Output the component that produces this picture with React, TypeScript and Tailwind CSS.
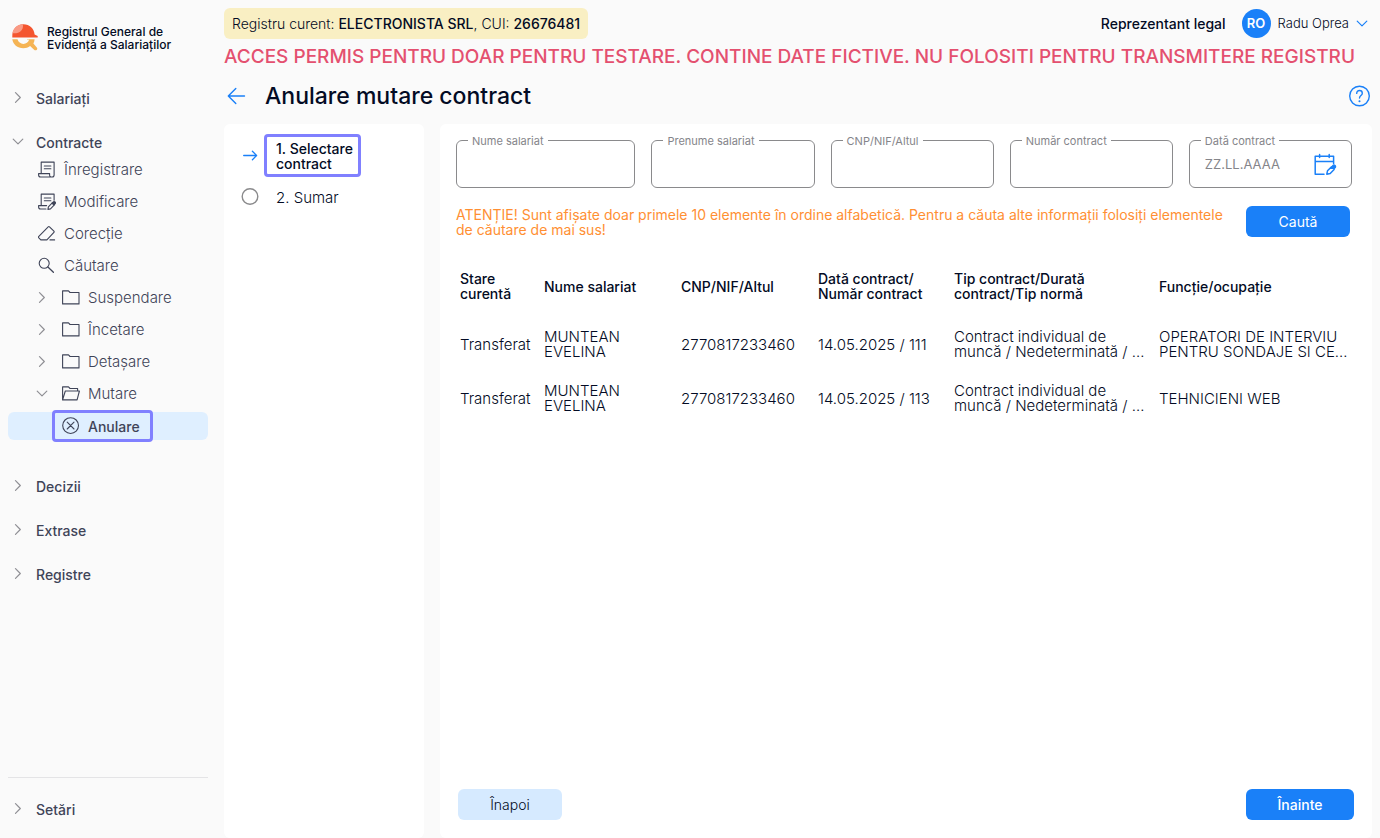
import type { ReactNode } from "react";

type IconProps = { className?: string };

function Svg({ className = "size-4", box = 16, children }: IconProps & { box?: number; children: ReactNode }) {
  return (
    <svg
      className={`shrink-0 ${className}`}
      viewBox={`0 0 ${box} ${box}`}
      fill="none"
      stroke="currentColor"
      strokeWidth="1.1"
      strokeLinecap="round"
      strokeLinejoin="round"
      aria-hidden="true"
    >
      {children}
    </svg>
  );
}

const ChevronRight = () => (
  <Svg className="size-3 text-[#8f8f94]" box={12}>
    <path d="M3.5.7 8.300 5.500l-4.800 4.800" strokeWidth="1.200" />
  </Svg>
);

const ChevronDown = ({ className = "size-3 text-[#8f8f94]" }: IconProps) => (
  <Svg className={className} box={12}>
    <path d="M1.200 3.100 6 7.900l4.800-4.800" strokeWidth="1.200" />
  </Svg>
);

const ScrollIcon = () => (
  <Svg className="size-[18px]" box={18}>
    <path d="M2.600 12V1.100h12.900V14a2 2 0 0 1-2 2H2a2 2 0 0 1-2-2v-1.400h11v1.700a1.700 1.700 0 0 0 1.700 1.700M5.700 5h6.600M5.700 7.800h6.600" transform="translate(.6 0)" />
  </Svg>
);

const ScrollEditIcon = () => (
  <Svg className="size-[18px]" box={18}>
    <path d="M3.200 12V1.100h12.900v6.200M8 16H2.600a2 2 0 0 1-2-2v-1.400h8M6.300 5h6.600M6.300 7.800h6.600" />
    <path d="m9.900 16.400.5-2.600 3.600-3.700 2.100 2.100-3.600 3.700z" />
    <path d="m14.200 9.900 1-.9a1.200 1.200 0 0 1 1.800 1.800l-.9 1.100z" fill="currentColor" />
  </Svg>
);

const EraserIcon = () => (
  <Svg className="size-[18px]" box={18}>
    <path d="M2.800 14.900.6 12.600a.8.8 0 0 1 0-1l9.600-9.800a.9.9 0 0 1 1.300 0l4.400 4.400a.9.9 0 0 1 0 1.200l-7 7.500zM12 14.900h4.600" />
  </Svg>
);

const SearchIcon = () => (
  <Svg className="size-[18px]" box={18}>
    <circle cx="6.200" cy="6.300" r="5" />
    <path d="m9.900 10 5.500 5.200" strokeWidth="1.300" />
  </Svg>
);

const FolderIcon = () => (
  <Svg className="size-[18px]" box={18}>
    <path d="M.6 14.900v-13h5.900L8 3.500h9v11.400z" />
  </Svg>
);

const FolderOpenIcon = () => (
  <Svg className="size-[18px]" box={18}>
    <path d="M.6 14.900v-13h5.900L8 3.500h7.600v2.400M.6 14.900 3.300 6h14.100l-2.300 8.900z" />
  </Svg>
);

const CancelIcon = () => (
  <Svg className="size-[18px]" box={18}>
    <circle cx="8.600" cy="8.600" r="7.900" />
    <path d="m5.200 5.200 6.800 6.800M12 5.200 5.200 12" />
  </Svg>
);

const CalendarEditIcon = () => (
  <Svg className="size-6" box={24}>
    <path d="M11 22.200H2.200v-18h18.400v7.400M2.200 9.600h18.400M6.600 2.400v3.200M16.200 2.400v3.200" strokeWidth="1.500" />
    <path d="m13.800 22.200.7-3.400 4-3.900 2.600 2.600-3.900 4z" strokeWidth="1.500" />
    <path d="m19 14.400.8-.9a1.600 1.600 0 0 1 2.300 2.300l-.9.9z" fill="currentColor" />
  </Svg>
);

function Logo() {
  return (
    <svg className="h-7 w-7 shrink-0" viewBox="0 0 28 28" aria-hidden="true">
      <path d="M.3 12.400C0 5.600 4.900.2 11.300.2c6.400 0 11 4.800 11.300 10.300l3.100 1.400v1.600H.3z" fill="#f4552f" />
      <path d="M.4 9.300C1 4.500 5 .4 10.800.2c1 3.400-1.300 8.200-6.600 9.100z" fill="#f99a85" />
      <path d="M.3 15.300h5.200c.8 2.800 3 4.600 5.900 4.600 2.700 0 4.800-1.600 5.700-4.100h-2v-.5h7.500c-.1 1.600-.5 3-1.200 4.200l3.400 3.900c.8.900.6 1.900-.2 2.500-.8.700-1.700.6-2.500-.2l-4-3.600c-1.900 1.400-4.200 2.200-6.700 2.200-6 0-10.500-3.900-11.100-9z" fill="#f5b455" />
    </svg>
  );
}

function Section({ label, open = false }: { label: string; open?: boolean }) {
  return (
    <a href="#" className="flex h-7 items-center gap-3 pl-1 text-[14px] font-medium">
      {open ? <ChevronDown /> : <ChevronRight />}
      {label}
    </a>
  );
}

function Leaf({ label, icon }: { label: string; icon: ReactNode }) {
  return (
    <a href="#" className="flex h-7 items-center gap-2 pl-[30px]">
      {icon}
      {label}
    </a>
  );
}

function Folder({ label, open = false }: { label: string; open?: boolean }) {
  return (
    <a href="#" className="flex h-7 items-center gap-2 pl-7">
      {open ? <ChevronDown /> : <ChevronRight />}
      <span className="flex items-center gap-2 pl-[6px]">
        {open ? <FolderOpenIcon /> : <FolderIcon />}
        {label}
      </span>
    </a>
  );
}

function Sidebar() {
  return (
    <nav className="flex w-[216px] shrink-0 flex-col px-2 text-[15px] text-[#3f4458]">
      <a href="#" className="flex h-[84px] items-start gap-[7px] pt-6 pl-1 text-[#030b24]">
        <Logo />
        <span className="pt-px text-[12px] leading-[13px] font-medium">
          Registrul General de
          <br />
          Evidență a Salariaților
        </span>
      </a>
      <Section label="Salariați" />
      <div className="mt-4 flex flex-col">
        <Section label="Contracte" open />
        <div className="flex flex-col gap-1 font-light">
          <Leaf label="Înregistrare" icon={<ScrollIcon />} />
          <Leaf label="Modificare" icon={<ScrollEditIcon />} />
          <Leaf label="Corecție" icon={<EraserIcon />} />
          <Leaf label="Căutare" icon={<SearchIcon />} />
          <Folder label="Suspendare" />
          <Folder label="Încetare" />
          <Folder label="Detașare" />
          <Folder label="Mutare" open />
          <a href="#" className="flex h-7 items-center rounded-md bg-[#dfefff] pl-11 text-[14px] font-medium">
            <span className="flex h-8 items-center gap-2 rounded-sm border-3 border-[#8080ff] pr-[10px] pl-[7px]">
              <CancelIcon />
              Anulare
            </span>
          </a>
        </div>
      </div>
      <div className="mt-8 flex flex-col gap-4">
        <Section label="Decizii" />
        <Section label="Extrase" />
        <Section label="Registre" />
      </div>
      <div className="mt-auto border-t border-[#e4e4e6] pt-[17px] pb-[15px]">
        <Section label="Setări" />
      </div>
    </nav>
  );
}

function Field({ id, label, placeholder, children }: { id: string; label: string; placeholder?: string; children?: ReactNode }) {
  return (
    <div className="relative flex h-12 min-w-0 items-center rounded-md border border-[#8a8a8c] pr-[14px] pl-[15px]">
      <label htmlFor={id} className="absolute -top-2 left-[11px] bg-white px-1 text-[11px] leading-4 whitespace-nowrap text-[#85858a]">
        {label}
      </label>
      <input
        id={id}
        type="text"
        placeholder={placeholder}
        className="h-full w-full min-w-0 bg-transparent text-[13px] outline-none placeholder:text-[#85858a]"
      />
      {children}
    </div>
  );
}

const headers = ["Stare curentă", "Nume salariat", "CNP/NIF/Altul", "Dată contract/ Număr contract", "Tip contract/Durată contract/Tip normă", "Funcție/ocupație"];

const rows = [
  ["Transferat", "MUNTEAN EVELINA", "2770817233460", "14.05.2025 / 111", "Contract individual de muncă / Nedeterminată / …", "OPERATORI DE INTERVIU PENTRU SONDAJE SI CE…"],
  ["Transferat", "MUNTEAN EVELINA", "2770817233460", "14.05.2025 / 113", "Contract individual de muncă / Nedeterminată / …", "TEHNICIENI WEB"],
];

function ContractsTable() {
  return (
    <table className="w-full table-fixed text-left text-[15px] leading-[15px]">
      <colgroup>
        <col className="w-[84px]" />
        <col className="w-[137px]" />
        <col className="w-[137px]" />
        <col className="w-[136px]" />
        <col className="w-[205px]" />
        <col />
      </colgroup>
      <thead>
        <tr className="h-[62px]">
          {headers.map((h) => (
            <th key={h} scope="col" className="px-1 text-[14px] leading-[15px] font-medium">
              {h}
            </th>
          ))}
        </tr>
      </thead>
      <tbody className="font-light">
        {rows.map((row, i) => (
          <tr key={i} className="h-[54px]">
            {row.map((cell, j) => (
              <td key={j} className="px-1">
                {cell}
              </td>
            ))}
          </tr>
        ))}
      </tbody>
    </table>
  );
}

export default function App() {
  return (
    <div className="flex min-h-screen bg-[#fafafa] font-['Inter',sans-serif] text-[15px] text-[#030b24]">
      <Sidebar />
      <main className="flex min-w-0 flex-1 flex-col px-2">
        <header className="flex items-center justify-between pt-2">
          <p className="rounded-md bg-[#f9efc3] px-2 text-[14px] leading-[31px] font-light">
            Registru curent: <strong className="font-medium">ELECTRONISTA SRL</strong>, CUI: <strong className="font-medium">26676481</strong>
          </p>
          <div className="flex items-center pr-1">
            <span className="pr-4 text-[14px] font-medium">Reprezentant legal</span>
            <button type="button" className="flex items-center gap-[7px] text-[13px] font-light">
              <span className="flex size-[29px] items-center justify-center rounded-full bg-[#1a80f8] font-semibold text-white">RO</span>
              Radu Oprea
              <ChevronDown className="size-3 text-[#1a80f8]" />
            </button>
          </div>
        </header>
        <p className="pt-1 text-[19px] leading-7 font-medium text-[#e4506f]">
          ACCES PERMIS PENTRU DOAR PENTRU TESTARE. CONTINE DATE FICTIVE. NU FOLOSITI PENTRU TRANSMITERE REGISTRU
        </p>
        <div className="mb-1 flex h-[49px] items-center gap-4">
          <button type="button" aria-label="Înapoi" className="text-[#1a80f8]">
            <Svg className="size-6" box={24}>
              <path d="M20.500 12H4.500M11.800 4.500 4.300 12l7.500 7.500" strokeWidth="1.400" />
            </Svg>
          </button>
          <h1 className="pl-px text-[23px] leading-8 font-medium">Anulare mutare contract</h1>
          <button type="button" aria-label="Ajutor" className="ml-auto text-[#1a80f8]">
            <Svg className="size-6" box={24}>
              <circle cx="11.500" cy="12" r="9.800" strokeWidth="1.400" />
              <path d="M8.700 9.400c0-1.800 1.200-2.900 2.800-2.900s2.800 1.100 2.800 2.700c0 2.300-2.800 2.500-2.800 4.900" strokeWidth="1.400" />
              <circle cx="11.500" cy="17.200" r=".5" fill="currentColor" />
            </Svg>
          </button>
        </div>
        <div className="flex flex-1 gap-4">
          <ol className="flex w-[200px] shrink-0 flex-col gap-2 rounded-md bg-white p-4 pt-[10px] leading-[15px]">
            <li className="flex items-center gap-[6px]">
              <Svg className="size-[18px] text-[#1a80f8]" box={18}>
                <path d="M3.700 8.500h12.800M12.400 4.300l4.200 4.200-4.200 4.200" strokeWidth="1.300" />
              </Svg>
              <span className="w-[97px] rounded-sm border-3 border-[#8080ff] pt-1 pb-[3px] pl-[9px] text-[14px] leading-[15px] font-medium">
                1. Selectare contract
              </span>
            </li>
            <li className="flex items-center gap-[17px] py-[3px] pl-px font-light">
              <Svg className="size-[18px] text-[#8a8a8c]" box={18}>
                <circle cx="9" cy="8.500" r="7.800" strokeWidth="1.400" />
              </Svg>
              2. Sumar
            </li>
          </ol>
          <section className="flex min-w-0 flex-1 flex-col rounded-md bg-white p-4">
            <form className="pr-1" onSubmit={(e) => e.preventDefault()}>
              <div className="grid grid-cols-[11fr_10fr_10fr_10fr_10fr] gap-4">
                <Field id="nume" label="Nume salariat" />
                <Field id="prenume" label="Prenume salariat" />
                <Field id="cnp" label="CNP/NIF/Altul" />
                <Field id="numar" label="Număr contract" />
                <Field id="data" label="Dată contract" placeholder="ZZ.LL.AAAA">
                  <button type="button" aria-label="Alege data" className="text-[#1a80f8]">
                    <CalendarEditIcon />
                  </button>
                </Field>
              </div>
              <div className="flex items-center justify-between gap-4 pt-[18px] pr-[2px]">
                <p className="max-w-[774px] text-[14px] leading-[15px] text-[#ff8f33]">
                  ATENȚIE! Sunt afișate doar primele 10 elemente în ordine alfabetică. Pentru a căuta alte informații folosiți elementele de căutare de mai sus!
                </p>
                <button type="submit" className="h-[31px] w-[104px] shrink-0 rounded-md bg-[#1a80f8] text-[14px] text-white">
                  Caută
                </button>
              </div>
            </form>
            <div className="pt-[18px] pr-1">
              <ContractsTable />
            </div>
            <div className="mt-auto flex justify-between px-[2px] pb-[2px]">
              <button type="button" className="h-[31px] w-[104px] rounded-md bg-[#d6eaff] text-[14px] font-light">
                Înapoi
              </button>
              <button type="button" className="h-[31px] w-[108px] rounded-md bg-[#1a80f8] text-[14px] font-medium text-white">
                Înainte
              </button>
            </div>
          </section>
        </div>
      </main>
    </div>
  );
}
